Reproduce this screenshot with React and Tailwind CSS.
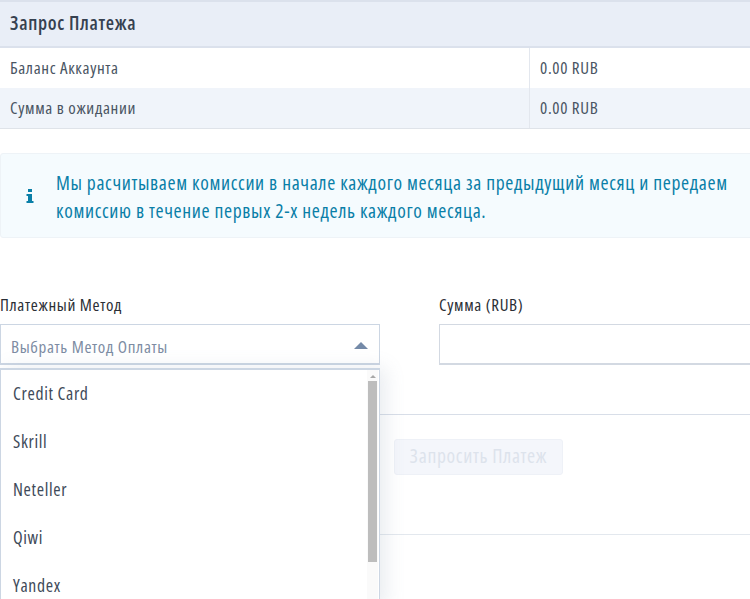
const options = ["Credit Card", "Skrill", "Neteller", "Qiwi", "Yandex"];

function InfoIcon() {
  return (
    <svg width="8" height="14" viewBox="0 0 8 14" className="fill-[#0a7fa8]">
      <rect x="2" y="0" width="4" height="3" />
      <path d="M0.5 5h5.5v7h1.5v2H0.5v-2H2V7H0.5z" />
    </svg>
  );
}

export default function App() {
  return (
    <div className="relative h-[599px] w-[750px] overflow-hidden bg-white">
      <div className="relative h-[599px] w-[770px] font-['Open_Sans',sans-serif] font-stretch-condensed text-[17px] tracking-[0.65px] text-[#4a5563]">
        <div className="flex h-[48px] items-center border-y-2 border-[#dbe1ec] bg-[#e9eef7] pb-[2px] pl-[10px] text-[19px] font-semibold text-[#364150]">
          Запрос Платежа
        </div>
        <div className="flex h-[40px] items-center">
          <div className="flex h-full w-[530px] items-center border-r border-[#e3e7ee] pl-[10px]">
            <span>Баланс Аккаунта</span>
          </div>
          <div className="pl-[10px]">0.00 RUB</div>
        </div>
        <div className="flex h-[41px] items-center border-b border-[#dfe3e9] bg-[#f0f4fa]">
          <div className="flex h-full w-[530px] items-center border-r border-[#e3e7ee] pl-[10px]">
            <span>Сумма в ожидании</span>
          </div>
          <div className="pl-[10px]">0.00 RUB</div>
        </div>

        <div className="mt-[24px] flex h-[85px] items-center rounded-[3px] border border-[#eef3f7] bg-[#f5fbfe] pl-[25px] text-[#0a7fa8]">
          <InfoIcon />
          <p className="ml-[22px] w-[690px] pt-[2px] text-[19.5px] leading-[28px]">
            Мы расчитываем комиссии в начале каждого месяца за предыдущий месяц и передаем комиссию в течение первых 2-х недель каждого месяца.
          </p>
        </div>

        <div className="mt-[56px] flex">
          <div className="w-[380px] shrink-0">
            <label className="block leading-[22px] text-[#2b2f36]">Платежный Метод</label>
            <div className="mt-[8px] flex h-[41px] items-center justify-between border border-b-2 border-[#ccd6e3] pl-[10px] pr-[11px] pt-[3px] text-[#7d8ca3]">
              <span className="translate-y-px">Выбрать Метод Оплаты</span>
              <span className="h-0 w-0 border-x-[7px] border-b-[7px] border-x-transparent border-b-[#748aa8]" />
            </div>
          </div>
          <div className="ml-[59px] grow">
            <label className="block leading-[22px] text-[#2b2f36]">Сумма (RUB)</label>
            <input className="mt-[8px] block h-[41px] w-full border border-b-2 border-[#d3d9e2] bg-white outline-none" />
          </div>
        </div>

        <div className="mt-[49px] border-t border-[#d8dee8] pb-[24px] pl-[394px] pt-[24px]">
          <button className="h-[36px] w-[169px] rounded-[3px] border border-[#eef1f7] bg-[#f4f6fb] pb-[2px] text-[19.5px] text-[#dde3ec]">
            Запросить Платеж
          </button>
        </div>
        <div className="mt-[35px] border-t border-[#e3e8ee]" />

        <div className="absolute left-0 top-[368px] flex h-[240px] w-[380px] border border-t-2 border-[#ccd6e3] bg-white shadow-[6px_0_18px_rgba(120,135,160,0.16)]">
          <ul className="-mt-[1px] grow pl-[12px] text-[17.7px] text-[#3e4a59]">
            {options.map((o) => (
              <li key={o} className="flex h-[48px] items-center">{o}</li>
            ))}
          </ul>
          <div className="mr-[1px] flex w-[11px] shrink-0 flex-col items-center bg-[#fafafa] pt-[5px]">
            <span className="h-0 w-0 border-x-[3px] border-b-[3px] border-x-transparent border-b-[#a8a8a8]" />
            <div className="mt-[3px] h-[181px] w-[9px] bg-[#bdbdbd]" />
          </div>
        </div>
      </div>
    </div>
  );
}
